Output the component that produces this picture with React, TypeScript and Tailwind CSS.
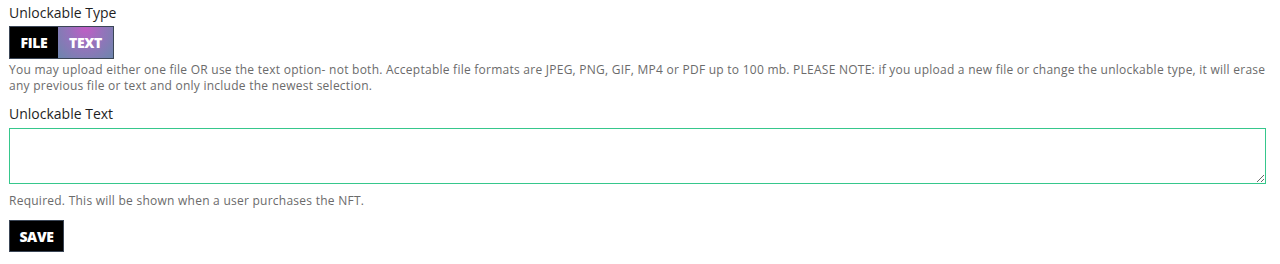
import { useState } from 'react';

const UnlockableForm = () => {
  const [type, setType] = useState<'file' | 'text'>('text');
  const [value, setValue] = useState('');

  return (
    <div className="px-[9px] pt-[3px] font-['Open_Sans','Noto_Sans',sans-serif] bg-white w-[1280px] h-[264px]">
      <label className="block text-[14px] leading-[19px] text-[#1f1f1f]">Unlockable Type</label>
      <div className="mt-[4px] flex w-max border border-[#3b4656]">
        <button
          onClick={() => setType('file')}
          className="h-[31px] w-[48px] bg-black text-white text-[14px] font-extrabold tracking-tight"
        >
          FILE
        </button>
        <button
          onClick={() => setType('text')}
          className="h-[31px] w-[55px] text-white text-[14px] font-extrabold tracking-tight bg-[radial-gradient(ellipse_at_top,#c25cc6_0%,#9573bb_45%,#6c86ad_100%)]"
        >
          TEXT
        </button>
      </div>
      <p className="mt-[3px] text-[12px] leading-[16px] text-[#6b6b6b] tracking-[0.25px] whitespace-nowrap">
        You may upload either one file OR use the text option- not both. Acceptable file formats are JPEG, PNG, GIF, MP4 or PDF up to 100 mb. PLEASE NOTE: if you upload a new file or change the unlockable type, it will erase
        <br />
        any previous file or text and only include the newest selection.
      </p>
      <label className="block mt-[10px] text-[14px] leading-[19px] text-[#1f1f1f]">Unlockable Text</label>
      {type === 'text' && (
        <textarea
          value={value}
          onChange={(e) => setValue(e.target.value)}
          className="block mt-[5px] w-[1257px] h-[56px] border border-[color:#36c78c] outline-none px-2 py-1 text-[14px]"
        />
      )}
      <p className="mt-[9px] text-[12px] leading-[16px] text-[#6b6b6b] tracking-[0.25px]">
        Required. This will be shown when a user purchases the NFT.
      </p>
      <button className="mt-[11px] h-[32px] w-[55px] bg-black text-white text-[14px] font-extrabold border border-[#3b4656] tracking-tight">
        SAVE
      </button>
    </div>
  );
};

export default function App() {
  return <UnlockableForm />;
}
